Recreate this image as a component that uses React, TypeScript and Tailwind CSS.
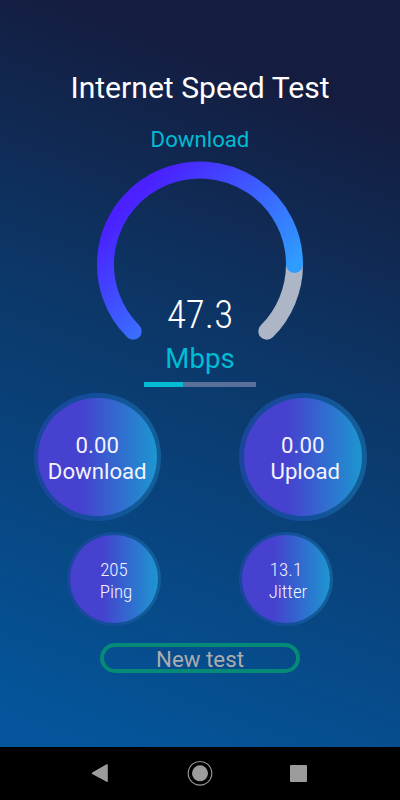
import clsx from "clsx";

interface StatCircleProps {
    value: string;
    label: string;
    size: 'large' | 'small';
    labelClass?: string;
}

function StatCircle(props: StatCircleProps) {
    const large = props.size === 'large';

    return (
        <div className={clsx(
            'rounded-full bg-[linear-gradient(90deg,#1a479d_10%,#124f9a_50%,#135d98_90%)]',
            large ? 'size-[127.5px] p-[4.5px]' : 'size-[94px] p-[3px]'
        )}>
            <div className={clsx(
                'size-full rounded-full flex flex-col items-center justify-center bg-[linear-gradient(90deg,#4641cf_36%,#1d96d0_100%)] text-[#f4f2ff]',
                large ? 'text-[22.2px] leading-[26px] pt-0.5' : 'text-[19px] leading-[22px] font-light font-stretch-75% pt-[3px]'
            )}>
                <span>{props.value}</span>
                <span className={props.labelClass}>{props.label}</span>
            </div>
        </div>
    )
}


function Gauge() {
    return (
        <svg className="w-[206px] h-[179px]" viewBox="97 161 206 179" fill="none" strokeWidth="17" strokeLinecap="round">
            <defs>
                <linearGradient id="progress" gradientUnits="userSpaceOnUse" x1="133" y1="198" x2="246.5" y2="311.5">
                    <stop offset="0" stopColor="#4a20ff"/>
                    <stop offset="1" stopColor="#2f9cff"/>
                </linearGradient>
            </defs>
            <path d="M266.8 331.3A94.5 94.5 0 0 0 294.5 264.5" stroke="#acb6c7"/>
            <path d="M133.2 331.3A94.5 94.5 0 1 1 294.5 264.5" stroke="url(#progress)"/>
        </svg>
    )
}


function NavigationBar() {
    return (
        <div className="h-[53px] bg-black">
            <svg className="w-full h-full" viewBox="0 747 400 53" fill="#9c9c9c">
                <path d="M92.2 772.6L106.6 764.3Q107.8 763.8 107.8 765V781.2Q107.8 782.5 106.6 781.8L92.2 774Q91.3 773.3 92.2 772.6Z"/>
                <circle cx="200" cy="773.3" r="8"/>
                <circle cx="200" cy="773.3" r="11.8" fill="none" stroke="#9c9c9c" strokeWidth="1.1"/>
                <rect x="290" y="765" width="17" height="17" rx="1"/>
            </svg>
        </div>
    )
}


export default function App() {
    return (
        <div className="w-[400px] h-[800px] flex flex-col font-['Roboto',sans-serif] overflow-hidden">

            <div className="h-[747px] flex flex-col items-center bg-[linear-gradient(20deg,#04559b_4%,#0c3768_54%,#141d40_86%)]">
                <h1 className="mt-[70px] text-[30.1px] leading-9 text-white">Internet Speed Test</h1>
                <p className="mt-5 h-[26px] text-[22.2px] leading-[26px] text-[#00bcd4]">Download</p>

                <div className="mt-[9px] h-[179px]">
                    <Gauge/>
                </div>

                <div className="-mt-12 h-[47px] text-[39px] leading-[47px] font-light font-stretch-75% text-white">47.3</div>
                <div className="mt-1 h-8 text-[27.6px] leading-8 text-[#00bcd4]">Mbps</div>

                <div className="mt-[7px] w-28 h-[5px] bg-[#59709a]">
                    <div className="w-[39px] h-full bg-[#00bcd4]"/>
                </div>

                <div className="mt-1.5 w-full px-[33.5px] flex justify-between">
                    <StatCircle size="large" value="0.00" label="Download"/>
                    <StatCircle size="large" value="0.00" label="Upload" labelClass="ml-[5px]"/>
                </div>

                <div className="mt-[11.5px] w-full px-[67px] flex justify-between">
                    <StatCircle size="small" value="205" label="Ping" labelClass="ml-1"/>
                    <StatCircle size="small" value="13.1" label="Jitter" labelClass="ml-1"/>
                </div>

                <button className="mt-[17px] w-[200px] h-[30px] flex items-center justify-center rounded-full border-4 border-[#048a77] text-[22.3px] leading-6 pt-0.5 text-[#acacac]">New test</button>
            </div>

            <NavigationBar/>
        </div>
    )
}
